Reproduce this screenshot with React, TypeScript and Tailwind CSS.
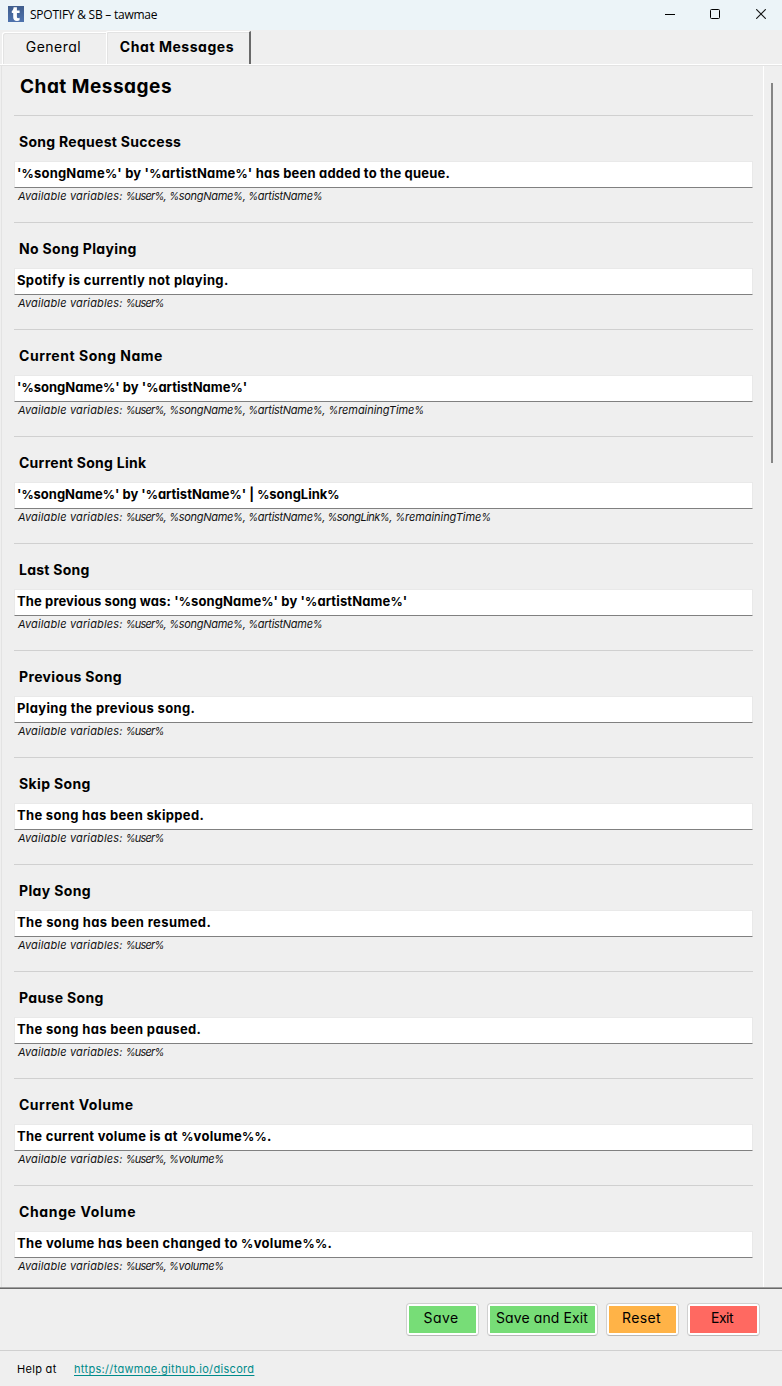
import { Fragment } from "react";

type Message = {
  title: string;
  titleClass: string;
  value: string;
  valueClass: string;
  variables: string[];
};

const messages: Message[] = [
  {
    title: "Song Request Success",
    titleClass: "tracking-[0.28px]",
    value: "'%songName%' by '%artistName%' has been added to the queue.",
    valueClass: "tracking-[0.2px]",
    variables: ["user", "songName", "artistName"],
  },
  {
    title: "No Song Playing",
    titleClass: "tracking-[0.33px]",
    value: "Spotify is currently not playing.",
    valueClass: "tracking-[0.35px]",
    variables: ["user"],
  },
  {
    title: "Current Song Name",
    titleClass: "tracking-[0.53px]",
    value: "'%songName%' by '%artistName%'",
    valueClass: "tracking-[0.02px]",
    variables: ["user", "songName", "artistName", "remainingTime"],
  },
  {
    title: "Current Song Link",
    titleClass: "tracking-[0.26px]",
    value: "'%songName%' by '%artistName%' | %songLink%",
    valueClass: "tracking-[-0.01px]",
    variables: ["user", "songName", "artistName", "songLink", "remainingTime"],
  },
  {
    title: "Last Song",
    titleClass: "tracking-[0.26px]",
    value: "The previous song was: '%songName%' by '%artistName%'",
    valueClass: "tracking-[0.12px]",
    variables: ["user", "songName", "artistName"],
  },
  {
    title: "Previous Song",
    titleClass: "tracking-[0.35px]",
    value: "Playing the previous song.",
    valueClass: "tracking-[0.36px]",
    variables: ["user"],
  },
  {
    title: "Skip Song",
    titleClass: "tracking-[0.36px]",
    value: "The song has been skipped.",
    valueClass: "tracking-[0.32px]",
    variables: ["user"],
  },
  {
    title: "Play Song",
    titleClass: "tracking-[0.36px]",
    value: "The song has been resumed.",
    valueClass: "tracking-[0.39px]",
    variables: ["user"],
  },
  {
    title: "Pause Song",
    titleClass: "tracking-[0.34px]",
    value: "The song has been paused.",
    valueClass: "tracking-[0.34px]",
    variables: ["user"],
  },
  {
    title: "Current Volume",
    titleClass: "tracking-[0.5px]",
    value: "The current volume is at %volume%%.",
    valueClass: "tracking-[0.28px]",
    variables: ["user", "volume"],
  },
  {
    title: "Change Volume",
    titleClass: "tracking-[0.63px]",
    value: "The volume has been changed to %volume%%.",
    valueClass: "tracking-[0.33px]",
    variables: ["user", "volume"],
  },
];

const variableTracking: Record<string, string> = {
  user: "tracking-[-0.77px]",
  songName: "tracking-[-0.29px]",
  artistName: "tracking-[-0.29px]",
  songLink: "tracking-[-0.51px]",
  remainingTime: "tracking-[-0.06px]",
  volume: "tracking-[-0.34px]",
};

const actions = [
  { label: "Save", box: "w-[73px]", fill: "bg-[#77dd77]", text: "tracking-[0.4px] pr-[3px]" },
  { label: "Save and Exit", box: "w-[111px]", fill: "bg-[#77dd77]", text: "tracking-[0.1px] pr-px" },
  { label: "Reset", box: "w-[73px]", fill: "bg-[#ffb347]", text: "tracking-[0.38px] pr-[2px]" },
  { label: "Exit", box: "w-[73px]", fill: "bg-[#ff6961]", text: "tracking-[-0.507px] pr-[3px]" },
];

function TitleBar() {
  return (
    <header className="flex h-[30px] shrink-0 items-center bg-[#ecf4f8] pl-2">
      <svg className="mb-[2px] size-4 shrink-0" viewBox="0 0 16 16">
        <defs>
          <linearGradient id="logo" x1="0" y1="0" x2="0" y2="1">
            <stop offset="0" stopColor="#3f5c8c" />
            <stop offset="1" stopColor="#4e73ae" />
          </linearGradient>
        </defs>
        <rect width="16" height="16" fill="url(#logo)" />
        <path
          d="M5.600 1.200h3.300v3.200h2.700v2.600H8.900v3.600c0 1.200.4 1.600 1.200 1.600.6 0 1-.1 1.500-.4v2.500c-.7.400-1.600.6-2.600.6-2.500 0-3.800-1.200-3.800-3.600V7H3.800V4.900c1.100-.5 1.700-1.900 1.800-3.700z"
          fill="#fff"
        />
      </svg>
      <span className="ml-1.5 font-['Open_Sans',sans-serif] text-[12px] leading-4 tracking-[-0.24px]">
        SPOTIFY &amp; SB – tawmae
      </span>
      <div className="ml-auto flex items-center gap-[35px] pr-[17px] pb-[2px]">
        <svg className="size-[10px]" viewBox="0 0 10 10">
          <path d="M0 5.500h10" stroke="#000" shapeRendering="crispEdges" />
        </svg>
        <svg className="mr-[1px] size-[10px]" viewBox="0 0 10 10" fill="none">
          <rect x=".5" y=".5" width="9" height="9" rx="1" stroke="#000" />
        </svg>
        <svg className="-mr-px size-[10px]" viewBox="0 0 10 10" fill="none">
          <path d="M.2.2l9.600 9.600M9.800.2l-9.600 9.600" stroke="#111" strokeWidth="1.100" />
        </svg>
      </div>
    </header>
  );
}

function Tabs() {
  return (
    <nav className="flex h-[34px] shrink-0 items-end pl-[2px] text-[14px] leading-5">
      <div className="flex h-8 w-[104px] justify-center rounded-tl-[3px] border-t border-l border-white pt-1 pr-[2px] shadow-[inset_1px_1px_0_#e3e3e3]">
        <span className="tracking-[0.491px]">General</span>
      </div>
      <div className="flex h-[33px] w-[145px] justify-center rounded-tl-[2px] border-t border-r-2 border-l border-t-white border-r-[#696969] border-l-white pt-[5px] pr-[2px] shadow-[inset_1px_1px_0_#e3e3e3]">
        <span className="font-bold tracking-[0.54px]">Chat Messages</span>
      </div>
    </nav>
  );
}

function TemplateText({ text }: { text: string }) {
  return (
    <>
      {text.split(/(%)/).map((part, index) =>
        part === "%" ? (
          <span key={index} className="text-[12px]">
            %
          </span>
        ) : (
          <Fragment key={index}>{part}</Fragment>
        ),
      )}
    </>
  );
}

function Variable({ name, first }: { name: string; first: boolean }) {
  return (
    <span className={variableTracking[name]}>
      {first ? "" : ", "}
      <span className="text-[10px]">%</span>
      {name}
      <span className="text-[10px]">%</span>
    </span>
  );
}

function MessageRow({ message }: { message: Message }) {
  return (
    <section className="h-[107px] border-t border-[#d0d0d0]">
      <h2 className={`ml-[5px] pt-4 text-[14px] leading-5 font-bold ${message.titleClass}`}>
        {message.title}
      </h2>
      <div className="mt-[9px] h-[27px] border border-[#e9e9e9] border-b-[#808080] bg-white pt-px pl-[2px]">
        <div className={`text-[13px] leading-5 font-bold whitespace-pre ${message.valueClass}`}>
          <TemplateText text={message.value} />
        </div>
      </div>
      <p className="ml-1 text-[11px] leading-4 whitespace-pre text-[#111] italic">
        <span className="tracking-[0.14px]">{"Available variables: "}</span>
        {message.variables.map((name, index) => (
          <Variable key={name} name={name} first={index === 0} />
        ))}
      </p>
    </section>
  );
}

export default function App() {
  return (
    <div className="flex h-[1386px] w-[782px] flex-col overflow-hidden bg-[#efefef] font-['Inter',sans-serif] text-black [font-feature-settings:'cv11']">
      <TitleBar />
      <Tabs />
      <main className="flex h-[1225px] shrink-0 flex-col border-t border-b border-t-white border-b-[#696969]">
        <div className="flex min-h-0 flex-1 border-t border-b border-t-[#e3e3e3] border-b-[#a0a0a0] pl-px">
          <div className="flex w-[763px] shrink-0 flex-col overflow-hidden border-r border-l border-r-white border-l-[#e3e3e3] pl-3">
            <h1 className="h-[49px] shrink-0 pt-[7px] pl-[6px] text-[19px] leading-7 font-bold tracking-[0.5px]">
              Chat Messages
            </h1>
            <div className="w-[739px] shrink-0">
              {messages.map((message) => (
                <MessageRow key={message.title} message={message} />
              ))}
            </div>
          </div>
          <div className="flex-1 pt-[17px] pl-[7px]">
            <div className="h-[380px] w-[2px] bg-[#858585]" />
          </div>
        </div>
      </main>
      <div className="flex h-[61px] shrink-0 justify-end gap-2 pt-[14px] pr-[22px]">
        {actions.map((action) => (
          <button
            key={action.label}
            className={`h-[33px] rounded-[4px] border border-[#d0d0d0] border-b-[#b8b8b8] bg-white p-[2px] ${action.box}`}
          >
            <span
              className={`flex h-[27px] justify-center pt-[2px] text-[14px] leading-5 whitespace-nowrap ${action.fill} ${action.text}`}
            >
              {action.label}
            </span>
          </button>
        ))}
      </div>
      <footer className="flex h-9 shrink-0 border-t border-[#d0d0d0] pt-[10px] pl-[17px] text-[11px] leading-4">
        <span className="w-[57px] tracking-[0.306px]">Help at</span>
        <a
          href="#discord"
          className="tracking-[0.32px] text-[#008b8b] underline decoration-1 underline-offset-2"
        >
          https://tawmae.github.io/discord
        </a>
      </footer>
    </div>
  );
}
